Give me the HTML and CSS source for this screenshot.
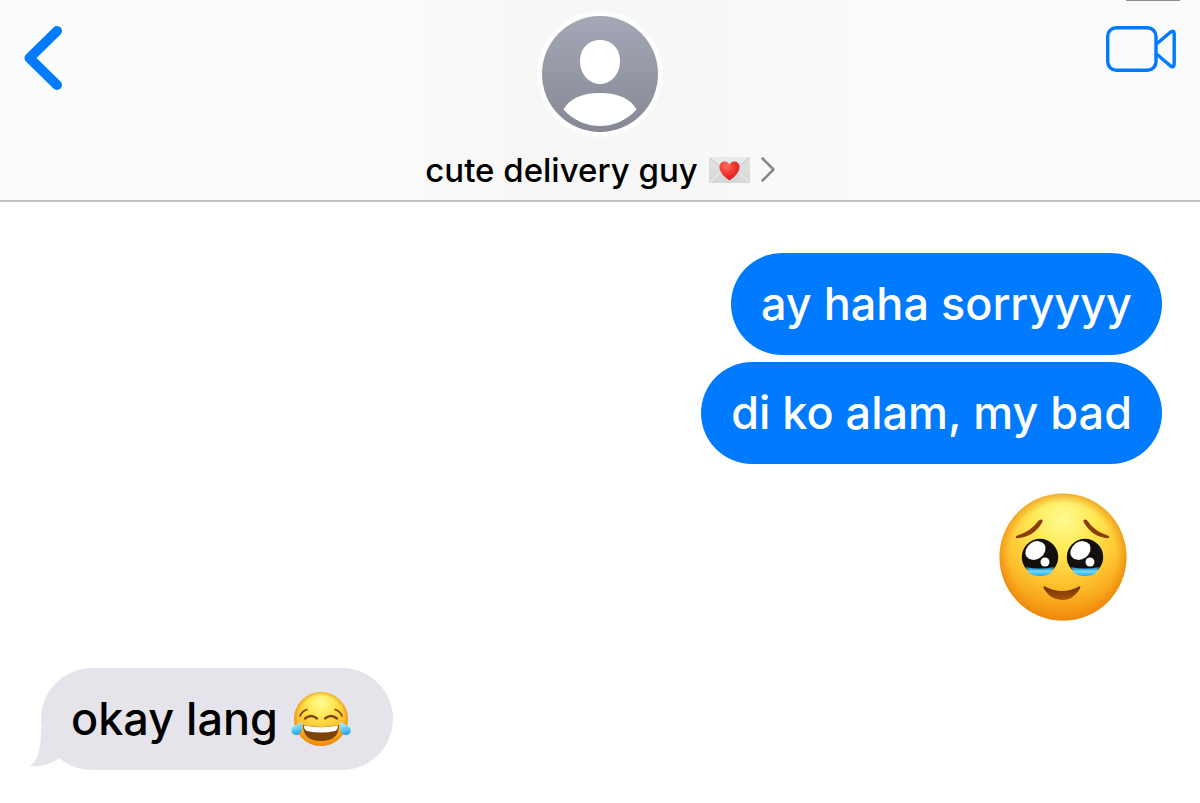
FILE: index.html
```html
<!DOCTYPE html>
<html lang="fil">
<head>
  <meta charset="UTF-8">
  <meta name="viewport" content="width=device-width, initial-scale=1.0">
  <title>Messages</title>
  <link rel="stylesheet" href="styles.css">
</head>
<body>
  <header class="chat-header">
    <div class="battery"></div>
    <button class="icon-btn back-btn" aria-label="Back">
      <svg width="38" height="64" viewBox="0 0 38 64" fill="none" stroke="#007aff" stroke-width="10" stroke-linecap="round" stroke-linejoin="round">
        <path d="M33 5L5.500 32L33 59"/>
      </svg>
    </button>
    <div class="contact">
      <svg class="avatar" viewBox="0 0 126 126" aria-hidden="true">
        <defs>
          <linearGradient id="avatar-bg" x1="0" y1="0" x2="0" y2="1">
            <stop offset="0" stop-color="#a4a8b7"/>
            <stop offset="1" stop-color="#868993"/>
          </linearGradient>
        </defs>
        <circle cx="63" cy="63" r="63" fill="#fdfdfd"/>
        <circle cx="63" cy="63" r="58" fill="url(#avatar-bg)"/>
        <path d="M63 29C75 29 83 38 83 50C83 63 74 73 63 73C52 73 43 63 43 50C43 38 51 29 63 29Z" fill="#fff"/>
        <path d="M63 82C81 82 94 88 99.500 98.500C90 109 77 115 63 115C49 115 36 109 26.500 98.500C32 88 45 82 63 82Z" fill="#fff"/>
      </svg>
      <a class="contact-name" href="#">
        <span>cute delivery guy</span>
        <svg width="41" height="28" viewBox="0 0 41 28" role="img" aria-label="love letter">
          <defs>
            <linearGradient id="paper" x1="0" y1="0" x2="0" y2="1">
              <stop offset="0" stop-color="#e2e3e2"/>
              <stop offset="1" stop-color="#d5d7d5"/>
            </linearGradient>
            <radialGradient id="heart" cx="0.35" cy="0.25" r="0.8">
              <stop offset="0" stop-color="#ff6a5c"/>
              <stop offset="0.5" stop-color="#f3362f"/>
              <stop offset="1" stop-color="#d51b1b"/>
            </radialGradient>
          </defs>
          <rect y="1" width="41" height="26" rx="1" fill="url(#paper)"/>
          <path d="M1 1H40L22.500 17Q20.500 19 18.500 17Z" fill="#e8e9e8"/>
          <path d="M1 26L15 13M40 26L26 13" stroke="#e6e8e6" stroke-width="1.500"/>
          <path d="M1 2L18.500 17Q20.500 19 22.500 17L40 2" fill="none" stroke="#c2c4c2"/>
          <path d="M20.500 24.500C14 20 10.500 15.500 10.500 11C10.500 7.500 13 5.500 15.700 5.500C18 5.500 19.700 6.800 20.500 8.700C21.300 6.800 23 5.500 25.300 5.500C28 5.500 30.500 7.500 30.500 11C30.500 15.500 27 20 20.500 24.500Z" fill="url(#heart)"/>
        </svg>
        <svg width="14" height="26" viewBox="0 0 14 26" fill="none" stroke="#88888b" stroke-width="2.500" stroke-linecap="round" stroke-linejoin="round" aria-hidden="true">
          <path d="M1.500 1.500L12.500 12.500L1.500 23.500"/>
        </svg>
      </a>
    </div>
    <button class="icon-btn video-btn" aria-label="Video call">
      <svg width="70" height="46" viewBox="0 0 70 46" fill="none" stroke="#007aff" stroke-width="3.400" stroke-linejoin="round">
        <rect x="1.700" y="1.700" width="48.300" height="42.600" rx="8.500"/>
        <path d="M50.500 18L64 6.500Q68.200 3.500 68.200 8V38Q68.200 42.500 64 39.500L50.500 28"/>
      </svg>
    </button>
  </header>

  <main class="messages">
    <div class="bubble sent">ay haha sorryyyy</div>
    <div class="bubble sent">di ko alam, my bad</div>

    <svg class="big-emoji" viewBox="0 0 128 128" role="img" aria-label="face holding back tears">
      <defs>
        <radialGradient id="face" cx="0.5" cy="0.2" r="0.8">
          <stop offset="0" stop-color="#fffb92"/>
          <stop offset="0.3" stop-color="#ffe955"/>
          <stop offset="0.65" stop-color="#fdc12d"/>
          <stop offset="1" stop-color="#f48b0b"/>
        </radialGradient>
        <radialGradient id="face-edge" cx="0.5" cy="0.5" r="0.5">
          <stop offset="0.84" stop-color="#ec8b0c" stop-opacity="0"/>
          <stop offset="1" stop-color="#e98310" stop-opacity="0.600"/>
        </radialGradient>
        <linearGradient id="tear" x1="0" y1="0" x2="0" y2="1">
          <stop offset="0" stop-color="#1675b4"/>
          <stop offset="0.5" stop-color="#6edcff"/>
          <stop offset="1" stop-color="#24a7ed"/>
        </linearGradient>
        <linearGradient id="smile" x1="0" y1="0" x2="0" y2="1">
          <stop offset="0" stop-color="#70300a"/>
          <stop offset="1" stop-color="#a85309"/>
        </linearGradient>
        <g id="eye">
          <circle r="18.200" fill="#140f0d"/>
          <path d="M-14 10Q0 13 14 10L11 16Q7 19 0 19Q-7 19 -11 16Z" fill="url(#tear)"/>
          <ellipse cx="-4.500" cy="-6.500" rx="10.800" ry="8.600" transform="rotate(-35 -4.500 -6.500)" fill="#fff"/>
          <circle cx="5" cy="5" r="4.500" fill="#fff"/>
        </g>
      </defs>
      <circle cx="64" cy="64" r="63.500" fill="url(#face)"/>
      <circle cx="64" cy="64" r="63.500" fill="url(#face-edge)"/>
      <path d="M18 44Q34 43 42 29Q43 27 41 28Q32 40 18 44ZM109 44Q94 43 86 29Q85 27 87 28Q95 40 109 44Z" fill="#8b3e0b" stroke="#8b3e0b" stroke-width="2.500" stroke-linejoin="round"/>
      <use href="#eye" x="41" y="64"/>
      <use href="#eye" x="86" y="64"/>
      <path d="M45 93Q63 103 81 93Q82 94 80 97Q74 107 63 107Q52 107 45 96Q44 94 45 93Z" fill="url(#smile)"/>
    </svg>

    <div class="bubble received">
      <svg class="tail" viewBox="0 0 34 42" aria-hidden="true">
        <path d="M11 0C11 18 9 32 0 38C11 39 22 36 34 27V0Z" fill="#e5e4ea"/>
      </svg>
      <span>okay lang</span>
      <svg class="emoji" viewBox="0 0 60 56" role="img" aria-label="face with tears of joy">
        <defs>
          <linearGradient id="drop" x1="0.3" y1="0" x2="0.5" y2="1">
            <stop offset="0" stop-color="#b2efff"/>
            <stop offset="0.55" stop-color="#62cdf5"/>
            <stop offset="1" stop-color="#249eea"/>
          </linearGradient>
        </defs>
        <circle cx="30" cy="28" r="27" fill="url(#face)"/>
        <circle cx="30" cy="28" r="27" fill="url(#face-edge)"/>
        <g fill="none" stroke="#81430b" stroke-linecap="round">
          <path d="M9 25Q11 20 16 18.500M51 25Q49 20 44 18.500" stroke-width="1.700"/>
          <path d="M14 27.500Q20 22.500 26 27.500M34 27.500Q40 22.500 46 27.500" stroke-width="2.300"/>
        </g>
        <path d="M12 34Q30 38 48 34Q48 50 30 50Q12 50 12 34Z" fill="#7d4308"/>
        <path d="M13 34.500Q30 38 47 34.500Q47 39 44 40Q30 43 16 40Q13 39 13 34.500Z" fill="#fff"/>
        <path d="M10.500 31C12 38 10 44 5 44C0 44 -1 39 2 36C4 34 7 33 10.500 31Z" fill="url(#drop)"/>
        <path d="M49.500 31C48 38 50 44 55 44C60 44 61 39 58 36C56 34 53 33 49.500 31Z" fill="url(#drop)"/>
      </svg>
    </div>
  </main>
</body>
</html>
```

FILE: styles.css
```css
* { box-sizing: border-box; }
body {
  margin: 0;
  min-height: 100vh;
  background-color: #fff;
  font-family: Inter, "Liberation Sans", sans-serif;
  font-weight: 500;
  color: #000;
}
.chat-header {
  position: relative;
  display: grid;
  grid-template-columns: 1fr auto 1fr;
  align-items: start;
  padding: 11px 24px 10px;
  border-bottom: 2px solid #c2c2c4;
  background: linear-gradient(90deg, #fbfcfd 0%, #fcfcfc 30%, #f7f7f7 45%, #f7f7f7 56%, #fbfbfb 75%, #fafbfd 100%);
}
.battery {
  position: absolute;
  top: 0;
  right: 20px;
  width: 54px;
  height: 1px;
  background-color: #8e8e90;
}
.icon-btn {
  padding: 0;
  border: none;
  background: none;
  cursor: pointer;
}
.icon-btn svg {
  display: block;
}
.back-btn {
  justify-self: start;
  margin-top: 15px;
}
.video-btn {
  justify-self: end;
  margin-top: 15px;
}
.contact {
  display: flex;
  flex-direction: column;
  align-items: center;
  gap: 13px;
}
.avatar {
  width: 126px;
  height: 126px;
}
.contact-name {
  display: flex;
  align-items: center;
  gap: 11px;
  font-size: 33px;
  line-height: 40px;
  color: #000;
  text-decoration: none;
}
.messages {
  display: flex;
  flex-direction: column;
  padding: 51px 38px 32px 41px;
  gap: 7px;
}
.bubble {
  position: relative;
  padding: 21px 30px;
  border-radius: 51px;
  font-size: 45px;
  line-height: 60px;
}
.sent {
  align-self: flex-end;
  background-color: #007aff;
  color: #fff;
}
.received {
  align-self: flex-start;
  display: flex;
  align-items: center;
  gap: 13px;
  padding-right: 42px;
  background-color: #e5e4ea;
}
.big-emoji {
  align-self: flex-end;
  width: 128px;
  height: 128px;
  margin: 22px 35px 40px 0;
}
.emoji {
  width: 60px;
  height: 56px;
}
.tail {
  position: absolute;
  left: -11px;
  bottom: 0;
  width: 34px;
  height: 42px;
}
```
